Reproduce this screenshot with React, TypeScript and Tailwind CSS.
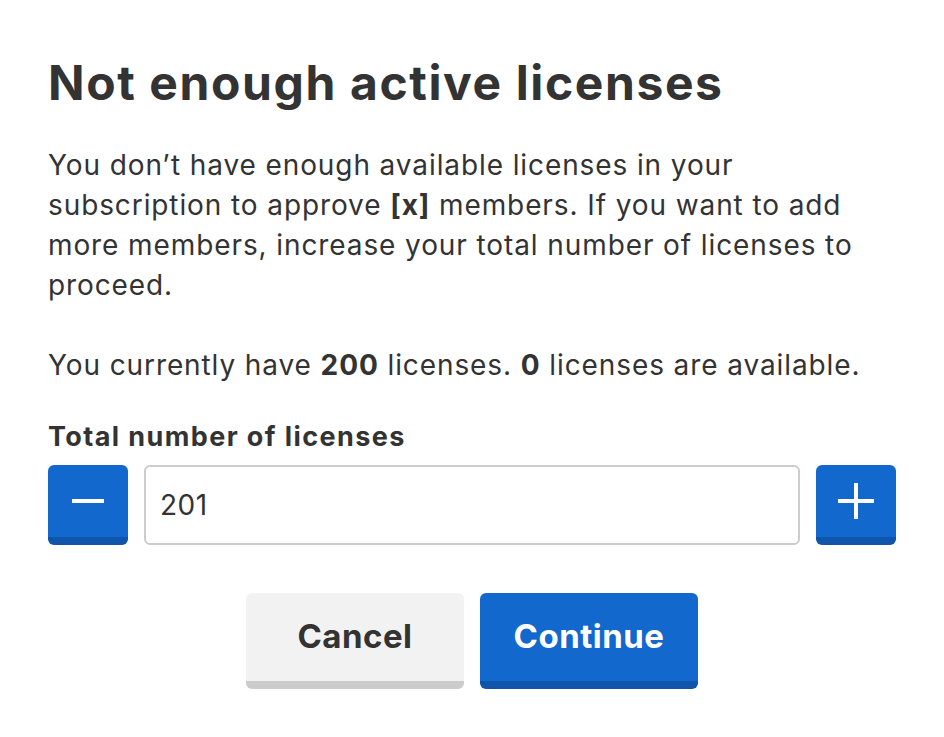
export default function App() {
  return (
    <div className="min-h-screen bg-white text-[#333333] font-['Inter',sans-serif]">
      <div className="px-12 pt-[53px]">
        <h1 className="text-[48px] leading-[60px] font-bold tracking-[1.6px]">Not enough active licenses</h1>
        <p className="mt-[32px] text-[28px] leading-[40px] tracking-[0.9px]">
          You don’t have enough available licenses in your
          <br />
          subscription to approve <b>[x]</b> members. If you want to add
          <br />
          more members, increase your total number of licenses to
          <br />
          proceed.
        </p>
        <p className="mt-[40px] text-[28px] leading-[40px] tracking-[0.9px]">
          You currently have <b>200</b> licenses. <b>0</b> licenses are available.
        </p>
        <label className="mt-[36px] block text-[27px] leading-[32px] font-bold tracking-[1.4px]">
          Total number of licenses
        </label>
        <div className="mt-[12px] flex gap-4">
          <button className="flex h-20 w-20 shrink-0 items-center justify-center rounded-md border-b-[8px] border-[#0f55ab] bg-[#1368ce]">
            <svg width="32" height="4" viewBox="0 0 32 4">
              <rect width="32" height="4" fill="white" />
            </svg>
          </button>
          <input
            className="h-20 flex-1 rounded-md border-2 border-[#cccccc] px-[14px] text-[28px] tracking-[0.5px] text-[#333333] outline-none"
            defaultValue="201"
          />
          <button className="flex h-20 w-20 shrink-0 items-center justify-center rounded-md border-b-[8px] border-[#0f55ab] bg-[#1368ce]">
            <svg width="36" height="36" viewBox="0 0 36 36">
              <rect x="16" width="4" height="36" fill="white" />
              <rect y="16" width="36" height="4" fill="white" />
            </svg>
          </button>
        </div>
        <div className="mt-12 flex justify-center gap-4">
          <button className="h-24 w-[218px] rounded-md border-b-[8px] border-[#cccccc] bg-[#f2f2f2] text-[33px] font-bold tracking-[0.5px] text-[#333333]">
            Cancel
          </button>
          <button className="h-24 w-[218px] rounded-md border-b-[8px] border-[#0f55ab] bg-[#1368ce] text-[33px] font-bold tracking-[0.5px] text-white">
            Continue
          </button>
        </div>
      </div>
    </div>
  );
}
